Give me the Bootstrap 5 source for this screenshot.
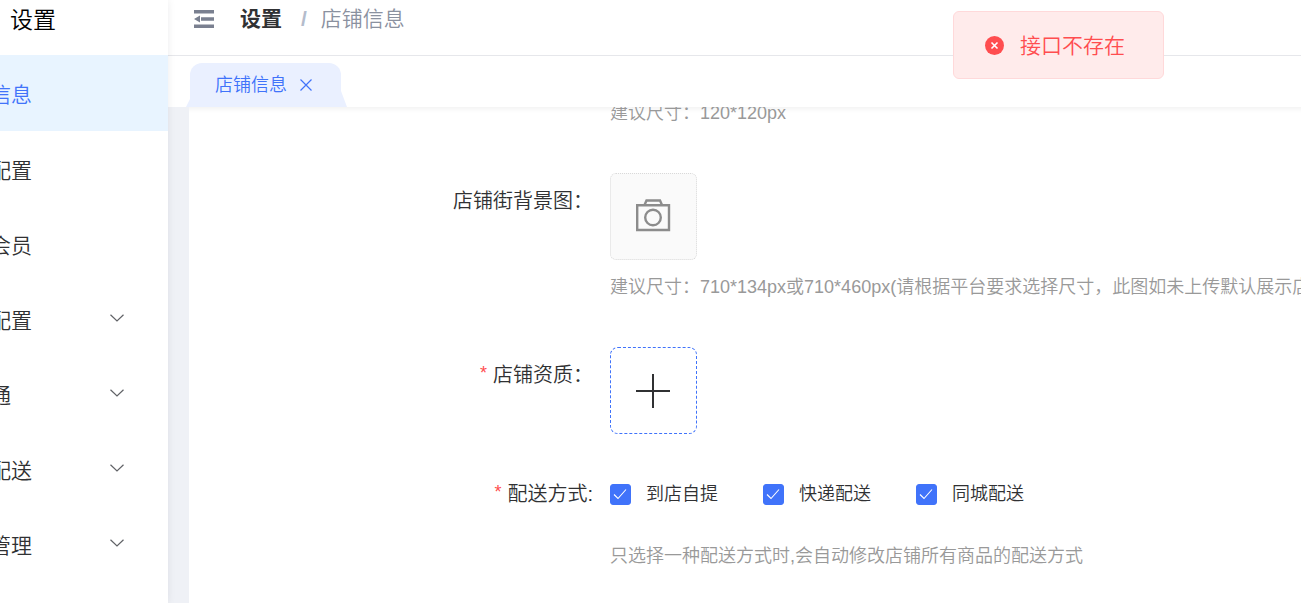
<!DOCTYPE html>
<html lang="zh-CN">
<head>
<meta charset="utf-8">
<meta name="viewport" content="width=device-width, initial-scale=1">
<title>店铺信息</title>
<link href="https://cdn.jsdelivr.net/npm/bootstrap@5.3.0/dist/css/bootstrap.min.css" rel="stylesheet">
<style>
  body {
    font-family: "Liberation Sans", "Noto Sans CJK SC", sans-serif;
    font-weight: 350;
    font-size: 18px;
    line-height: 26px;
    color: #303133;
    background: #fff;
  }
  svg { display: block; flex: none; }
  a { text-decoration: none; color: inherit; }

  .side-panel { width: 168px; z-index: 2; box-shadow: 0 0 8px rgba(0, 21, 41, .08); font-size: 21px; }
  .side-title { height: 55px; padding: 7px 0 0 10px; font-size: 23px; color: #000; }
  .side-item { height: 75px; padding-top: 4px; }
  .side-item.active { height: 76px; background: #e8f4ff; color: #4073fa; }
  .side-label { width: 32px; height: 32px; line-height: 32px; }
  .side-label-short { width: 11px; }
  .side-arrow { margin: 0 44px 5px auto; }

  .top-bar { height: 56px; padding: 0 24px 18px 26px; border-bottom: 1px solid #e6e7eb; font-size: 21px; }
  .crumb-parent { margin-left: 26px; }
  .crumb-sep { margin: 0 14px 0 19px; color: #b4bccc; font-weight: 700; }
  .crumb-now { color: #8a919f; }

  .tab-bar { height: 51px; padding: 7px 0 0 22px; }
  .tab-item { width: 151px; padding: 0 29px 0 25px; background: #eaf0ff; color: #4073fa; border-radius: 12px 12px 0 0; }
  .tab-item::before, .tab-item::after { content: ""; position: absolute; bottom: 0; width: 6px; height: 16px; background: #eaf0ff; }
  .tab-item::before { right: 100%; width: 4px; height: 8px; clip-path: polygon(100% 0, 100% 100%, 0 100%); }
  .tab-item::after { left: 100%; clip-path: polygon(0 0, 100% 100%, 0 100%); }
  .tab-close { background: none; border: 0; padding: 0; color: inherit; }

  .page-body { background: #eff1f6; padding-left: 21px; }
  .sheet { background: #fff; box-shadow: inset 0 6px 5px -4px rgba(0, 0, 0, .06); }
  .field { gap: 17px; }
  .field-name { width: 404px; flex: none; font-size: 20px; text-align: right; }
  .field-name.beside-box { padding-top: 15px; }
  .star { color: #ff4d4f; font-size: 18px; line-height: 20px; margin-right: 6px; vertical-align: 3px; }
  .hint { color: #999; white-space: nowrap; }
  .hint-first { margin-top: -7px; margin-bottom: 47px; }
  .upload-box { width: 87px; height: 87px; border-radius: 6px; padding: 0; }
  .upload-photo { background: #fafafa; border: 1px dotted #d9d9d9; color: #8c8c8c; margin-bottom: 14px; }
  .upload-add { background: #fff; border: 1px dashed #4073fa; color: #303133; border-radius: 8px; }
  .gap-row { margin-bottom: 47px; }
  .choices { gap: 45px; margin-bottom: 36px; }
  .choice { gap: 15px; }
  .choice .form-check-input {
    width: 21px; height: 21px; margin: 0; border-radius: 3px; flex: none;
  }
  .choice .form-check-input:checked {
    background-color: #4073fa; border-color: #4073fa; background-size: 21px;
    background-image: url("data:image/svg+xml,%3Csvg xmlns='http://www.w3.org/2000/svg' viewBox='0 0 21 21'%3E%3Cpath d='M4 10.500l4 4L16 5.500' fill='none' stroke='%23fff' stroke-width='1.100'/%3E%3C/svg%3E");
    background-origin: border-box;
  }

  .notice { top: 11px; right: 137px; height: 68px; padding: 1px 38px 0 31px; gap: 16px; z-index: 5;
    background: #ffebeb; border: 1px solid #ffd9da; border-radius: 6px; color: #ff4d4f; font-size: 21px; }
</style>
</head>
<body>
<div class="d-flex vh-100 overflow-hidden position-relative">
  <aside class="side-panel bg-white flex-shrink-0 position-relative">
    <div class="side-title">设置</div>
    <nav class="d-flex flex-column">
      <a href="#" class="side-item active d-flex align-items-center"><span class="side-label d-flex justify-content-end text-nowrap">信息</span></a>
      <a href="#" class="side-item d-flex align-items-center"><span class="side-label d-flex justify-content-end text-nowrap">配置</span></a>
      <a href="#" class="side-item d-flex align-items-center"><span class="side-label d-flex justify-content-end text-nowrap">会员</span></a>
      <a href="#" class="side-item d-flex align-items-center"><span class="side-label d-flex justify-content-end text-nowrap">配置</span>
        <svg class="side-arrow" width="14" height="8" viewBox="0 0 14 8" fill="none" stroke="#606266" stroke-width="1.200"><path d="M.5.800 7 7 13.500.800"/></svg></a>
      <a href="#" class="side-item d-flex align-items-center"><span class="side-label side-label-short d-flex justify-content-end text-nowrap">通</span>
        <svg class="side-arrow" width="14" height="8" viewBox="0 0 14 8" fill="none" stroke="#606266" stroke-width="1.200"><path d="M.5.800 7 7 13.500.800"/></svg></a>
      <a href="#" class="side-item d-flex align-items-center"><span class="side-label d-flex justify-content-end text-nowrap">配送</span>
        <svg class="side-arrow" width="14" height="8" viewBox="0 0 14 8" fill="none" stroke="#606266" stroke-width="1.200"><path d="M.5.800 7 7 13.500.800"/></svg></a>
      <a href="#" class="side-item d-flex align-items-center"><span class="side-label d-flex justify-content-end text-nowrap">管理</span>
        <svg class="side-arrow" width="14" height="8" viewBox="0 0 14 8" fill="none" stroke="#606266" stroke-width="1.200"><path d="M.5.800 7 7 13.500.800"/></svg></a>
    </nav>
  </aside>

  <div class="d-flex flex-column flex-grow-1 overflow-hidden">
    <header class="top-bar d-flex align-items-center flex-shrink-0">
      <button type="button" class="btn p-0 border-0" aria-label="收起菜单">
        <svg width="20" height="18" viewBox="0 0 20 18" fill="#7a8090"><path d="M0 0h20v3.500H0zM7 7.200h13v3.500H7zM0 14.500h20V18H0zM6 5.500v7L0 9z"/></svg>
      </button>
      <a href="#" class="crumb-parent fw-bold">设置</a>
      <span class="crumb-sep">/</span>
      <span class="crumb-now">店铺信息</span>
    </header>

    <div class="tab-bar d-flex flex-shrink-0">
      <div class="tab-item position-relative d-flex align-items-center justify-content-between">
        <a href="#">店铺信息</a>
        <button type="button" class="tab-close" aria-label="关闭">
          <svg width="12" height="12" viewBox="0 0 12 12" fill="none" stroke="currentColor" stroke-width="1.200"><path d="M.5.500l11 11M11.500.500l-11 11"/></svg>
        </button>
      </div>
    </div>

    <main class="page-body flex-grow-1 overflow-hidden">
      <form class="sheet h-100 overflow-hidden">
        <div class="field d-flex">
          <div class="field-name"></div>
          <div class="hint hint-first">建议尺寸：120*120px</div>
        </div>
        <div class="field d-flex gap-row">
          <label class="field-name beside-box" for="bg">店铺街背景图：</label>
          <div>
            <button type="button" id="bg" class="upload-box upload-photo d-flex align-items-center justify-content-center">
              <svg width="35" height="35" viewBox="0 0 35 35" fill="none" stroke="currentColor" stroke-width="2.400"><path d="M1.200 6.200h31.800v24.800H1.200zM8.500 6l2-4.500h13.500l2 4.500"/><circle cx="17" cy="18.500" r="7.800"/></svg>
            </button>
            <div class="hint">建议尺寸：710*134px或710*460px(请根据平台要求选择尺寸，此图如未上传默认展示店</div>
          </div>
        </div>
        <div class="field d-flex gap-row">
          <label class="field-name beside-box" for="cert"><span class="star">*</span>店铺资质：</label>
          <button type="button" id="cert" class="upload-box upload-add d-flex align-items-center justify-content-center">
            <svg width="35" height="35" viewBox="0 0 35 35" fill="none" stroke="currentColor" stroke-width="2"><path d="M17 1v34M0 18h34"/></svg>
          </button>
        </div>
        <div class="field d-flex">
          <div class="field-name" id="ship"><span class="star">*</span>配送方式:</div>
          <div>
            <div class="choices d-flex" role="group" aria-labelledby="ship">
              <label class="choice d-flex align-items-center"><input class="form-check-input" type="checkbox" checked>到店自提</label>
              <label class="choice d-flex align-items-center"><input class="form-check-input" type="checkbox" checked>快递配送</label>
              <label class="choice d-flex align-items-center"><input class="form-check-input" type="checkbox" checked>同城配送</label>
            </div>
            <div class="hint">只选择一种配送方式时,会自动修改店铺所有商品的配送方式</div>
          </div>
        </div>
      </form>
    </main>
  </div>

  <div class="notice position-absolute d-flex align-items-center" role="alert">
    <svg width="19" height="19" viewBox="0 0 19 19"><circle cx="9.500" cy="9.500" r="9.500" fill="#ff4d4f"/><path d="M6.500 6.500l6 6M12.500 6.500l-6 6" stroke="#fff" stroke-width="1.600"/></svg>
    <span>接口不存在</span>
  </div>
</div>
<script src="https://cdn.jsdelivr.net/npm/bootstrap@5.3.0/dist/js/bootstrap.bundle.min.js"></script>
</body>
</html>
